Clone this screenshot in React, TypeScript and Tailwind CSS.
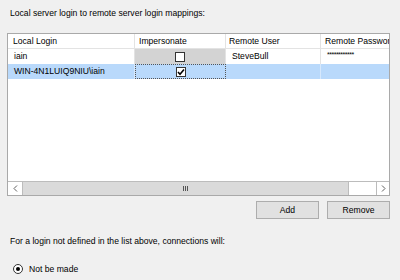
import React from "react";

const font = { fontFamily: '"Liberation Sans", Arial, sans-serif' };

function Check({ checked }: { checked?: boolean }) {
  return (
    <div className="w-[10px] h-[10px] bg-white border border-[#333333] flex items-center justify-center">
      {checked && (
        <svg width="8" height="8" viewBox="0 0 8 8">
          <path d="M1 4 L3 6.2 L7 1.5" stroke="#000" strokeWidth="1.6" fill="none" />
        </svg>
      )}
    </div>
  );
}

export default function App() {
  return (
    <div
      className="w-[400px] h-[280px] bg-[#f0f0f0] text-black text-[8.6px] px-[7px] flex flex-col overflow-hidden"
      style={font}
    >
      <div className="h-[26px] flex items-center pl-[3px] shrink-0">
        Local server login to remote server login mappings:
      </div>
      <div className="mt-[7px] w-[383px] h-[163px] border border-[#a9a9a9] bg-white flex flex-col shrink-0 overflow-hidden">
        <div className="flex-1 overflow-hidden">
          <div className="flex h-[15px] border-b border-[#e3e3e3] w-[480px]">
            <div className="w-[127px] border-r border-[#e3e3e3] pl-[5px] flex items-center">Local Login</div>
            <div className="w-[91px] border-r border-[#e3e3e3] pl-[4px] flex items-center">Impersonate</div>
            <div className="w-[95px] border-r border-[#e3e3e3] pl-[3px] flex items-center">Remote User</div>
            <div className="w-[140px] pl-[4px] flex items-center whitespace-nowrap">Remote Password</div>
          </div>
          <div className="flex h-[15px] w-[480px]">
            <div className="w-[127px] border-r border-[#e3e3e3] pl-[6px] flex items-center">iain</div>
            <div className="w-[91px] border-r border-[#e3e3e3] bg-[#d3d3d3] flex items-center justify-center">
              <Check />
            </div>
            <div className="w-[95px] border-r border-[#e3e3e3] pl-[6px] flex items-center">SteveBull</div>
            <div className="w-[140px] pl-[6px] flex items-start pt-[1px] text-[7px] tracking-[-0.5px]">************</div>
          </div>
          <div className="flex h-[15px] w-[480px] bg-[#b9d9fb]">
            <div className="w-[127px] border-r border-[#d6e8fc] pl-[6px] flex items-center">WIN-4N1LUIQ9NIU\iain</div>
            <div className="w-[91px] border border-dotted border-[#555555] flex items-center justify-center">
              <Check checked />
            </div>
            <div className="w-[95px] border-r border-[#d6e8fc]"></div>
            <div className="w-[140px]"></div>
          </div>
        </div>
        <div className="h-[14px] border-t border-[#bcbcbc] flex bg-white shrink-0">
          <div className="w-[15px] border-r border-[#bcbcbc] flex items-center justify-center">
            <svg width="5" height="7" viewBox="0 0 5 7">
              <path d="M4 0.5 L1 3.5 L4 6.5" stroke="#606060" strokeWidth="1" fill="none" />
            </svg>
          </div>
          <div className="w-[326px] bg-[#dadada] border-r border-[#bcbcbc] flex items-center justify-center gap-[1px]">
            <div className="w-px h-[5px] bg-[#555555]" />
            <div className="w-px h-[5px] bg-[#555555]" />
            <div className="w-px h-[5px] bg-[#555555]" />
          </div>
          <div className="flex-1 border-r border-[#bcbcbc]"></div>
          <div className="w-[12px] flex items-center justify-center">
            <svg width="5" height="7" viewBox="0 0 5 7">
              <path d="M1 0.5 L4 3.5 L1 6.5" stroke="#606060" strokeWidth="1" fill="none" />
            </svg>
          </div>
        </div>
      </div>
      <div className="mt-[5px] w-[383px] flex justify-end gap-[8px] shrink-0">
        <button className="w-[63px] h-[18px] bg-[#e1e1e1] border border-[#adadad] flex items-center justify-center">
          Add
        </button>
        <button className="w-[63px] h-[18px] bg-[#e1e1e1] border border-[#adadad] flex items-center justify-center">
          Remove
        </button>
      </div>
      <div className="mt-[16px] h-[12px] pl-[3px] flex items-center shrink-0">
        For a login not defined in the list above, connections will:
      </div>
      <div className="mt-[16px] h-[12px] pl-[6px] flex items-center gap-[6px] shrink-0">
        <div className="w-[10px] h-[10px] rounded-full border border-[#333333] bg-white flex items-center justify-center">
          <div className="w-[4px] h-[4px] rounded-full bg-black" />
        </div>
        <span>Not be made</span>
      </div>
    </div>
  );
}
